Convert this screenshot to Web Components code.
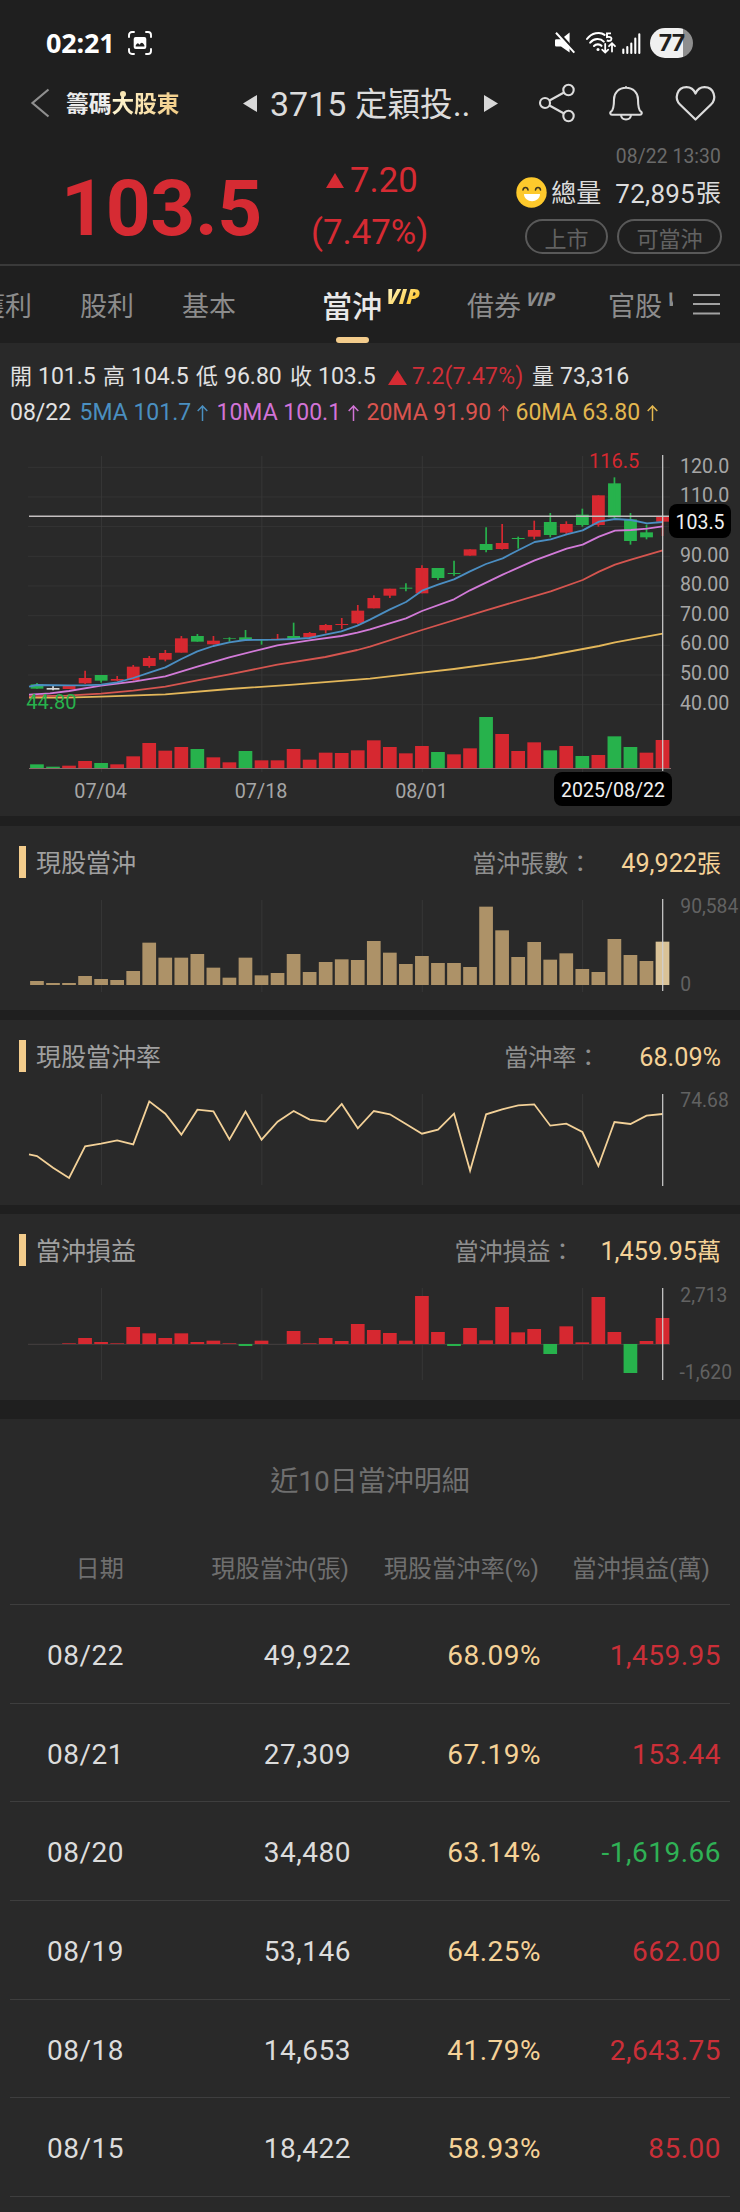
<!DOCTYPE html>
<html lang="zh-Hant">
<head>
<meta charset="utf-8">
<title>3715 定穎投控</title>
<style>
html,body{margin:0;background:#1f1f1f}
body{width:740px;height:2212px;overflow:hidden;font-family:Roboto,"Noto Sans CJK TC",sans-serif;color:#dcdcdc;font-size:23px}
</style>
</head>
<body>
<stock-app></stock-app>
<script>
const def = (name, html, after) => customElements.define(name, class extends HTMLElement {
  constructor(){ super(); this.attachShadow({mode:'open'}).innerHTML = html; }
  connectedCallback(){ if (after) after(this, this.shadowRoot); }
});

def('status-bar', `<style>
:host{display:flex;align-items:center;height:58px;padding:28px 47px 0 46px;box-sizing:border-box;color:#fff}
b{font:700 27px/30px "Noto Sans",sans-serif;margin-right:13px;letter-spacing:-.15px}
.sp{flex:1}
svg{display:block;overflow:visible}
.pill{width:43px;height:30px;border-radius:15px;background:linear-gradient(90deg,#f0f0f0 33px,#8e8e8e 33px);display:flex;align-items:center;justify-content:center;color:#1f1f1f;font:700 23px/30px Inter,sans-serif;letter-spacing:-.8px;margin-left:9px}
</style>
<b>02:21</b>
<svg width="24" height="24" viewBox="0 0 24 24" fill="none" stroke="#fff" stroke-width="1.9" stroke-linecap="round"><path d="M1 6V4a3 3 0 0 1 3-3h2M18 1h2a3 3 0 0 1 3 3v2M23 18v2a3 3 0 0 1-3 3h-2M6 23H4a3 3 0 0 1-3-3v-2"/><rect x="5.7" y="6" width="12.6" height="12" rx="2" fill="#fff" stroke="none"/><path d="M7.7 14.6c1.5-2.8 2.7-3 3.8-.8 1.5-2.6 3.3-3 4.9.8v1H7.7z" fill="#1f1f1f" stroke="none"/></svg>
<span class="sp"></span>
<svg width="21" height="22" viewBox="0 0 21 22"><path d="M0 8.5a1.3 1.3 0 0 1 1.3-1.3H6L14.6.5V20.5L6 14.5H1.3A1.3 1.3 0 0 1 0 13.2z" fill="#fff"/><path d="M2.7-.2 21 20" stroke="#1f1f1f" stroke-width="2.6"/><path d="M1 .7 19.3 20.6" stroke="#fff" stroke-width="2"/></svg>
<svg width="30" height="22" viewBox="0 0 30 22" style="margin-left:10px" fill="none" stroke="#fff" stroke-width="2.1" stroke-linecap="round"><path d="M1 7C5.5.8 14-.6 18.6 2.8M4.2 10.6C8 6 14.5 6 17.8 9.6M8 14c2-2 5.500-2.200 7.500-.2"/><circle cx="12" cy="17.500" r="1.500" fill="#fff" stroke="none"/><path d="M19.200 12v8.600m-3-3 3 3 3-3M26 19.500v-8m-3 2.700 3-3 3 3" stroke-width="1.800"/><path d="M25 1.400h-4v3.700c4-.8 5 .8 4.200 2.600-.8 1.500-3 1.500-4.400.7" stroke-width="1.900" stroke-linecap="butt"/></svg>
<svg width="19" height="21" viewBox="0 0 19 21" style="margin-left:6px"><path d="M1.300 20v-3.500M5.300 20v-6M9.300 20V10.500M13.300 20V5.500M17.300 20V1.200" stroke="#fff" stroke-width="2.100" stroke-linecap="round"/></svg>
<span class="pill">77</span>`);

def('nav-bar', `<style>
:host{display:flex;height:90px;align-items:center;box-sizing:border-box;padding:0 25px 0 31px}
svg{display:block;overflow:visible;flex:none}
.logo{position:relative;margin-left:17px;font:700 22.700px/30px "Noto Sans CJK TC",sans-serif;width:115px;color:#ececec;white-space:nowrap;margin-top:-1px}
.logo span{background:linear-gradient(100deg,#fff9d8,#f2cb83);-webkit-background-clip:text;background-clip:text;color:transparent}
.logo i{position:absolute;left:54px;top:3px;width:6px;height:6px;border-radius:50%;background:#f8e6b4}
.t{font-size:34px;line-height:44px;width:205px;margin-left:13px;white-space:nowrap;padding-top:3px}
.t span{font-size:32.600px}
</style>
<svg width="18" height="28" viewBox="0 0 18 28"><path d="M17.500.5 1.500 14l16 13.500" fill="none" stroke="#8f8f8f" stroke-width="2.200"/></svg>
<div class="logo">籌碼<span>大股東</span><i></i></div>
<svg width="14" height="17" viewBox="0 0 14 17" style="margin-left:62px"><path d="M14 0v17L0 8.500z" fill="#d8d8d8"/></svg>
<div class="t">3715 <span>定穎投</span>..</div>
<svg width="14" height="17" viewBox="0 0 14 17" style="margin-left:9px"><path d="M0 0v17l14-8.500z" fill="#d8d8d8"/></svg>
<svg width="36" height="38" viewBox="0 0 36 38" style="margin-left:41px" fill="none" stroke="#dcdcdc" stroke-width="2.100"><circle cx="6" cy="19" r="5"/><circle cx="29.500" cy="6" r="5.200"/><circle cx="29.500" cy="32" r="5.200"/><path d="m10.500 16.500 14.500-8M10.500 21.500l14.500 8"/></svg>
<svg width="34" height="36" viewBox="0 0 34 36" style="margin-left:34px" fill="none" stroke="#dcdcdc" stroke-width="2.100" stroke-linejoin="round"><path d="M17 1.200v1.500M17 2.700c-7.300 0-12 5.300-12 11.500 0 8-.8 11-3 12.500-1.300 1-1 3 1 3h28c2 0 2.300-2 1-3-2.200-1.500-3-4.500-3-12.500C29 8 24.300 2.700 17 2.700zM12 30c.5 6 9.500 6 10 0"/></svg>
<svg width="39" height="35" viewBox="0 0 39 35" style="margin-left:33px" fill="none" stroke="#dcdcdc" stroke-width="2.200" stroke-linejoin="round"><path d="M19.500 33.500 4 18.500C-2 12.500.8 1.200 10.500 1.200c4.500 0 7.500 2.800 9 6.300 1.500-3.500 4.500-6.300 9-6.300C38.200 1.200 41 12.500 35 18.500z"/></svg>`);

def('price-head', `<style>
:host{display:flex;height:118px;box-sizing:border-box;border-bottom:2px solid #3a3a3a;padding:0 19px 0 61px;color:#d62b33}
.p{font:700 78.500px/90px Roboto;letter-spacing:-.4px;width:247px;padding-top:15px;height:90px;white-space:nowrap}
.c{width:140px;font-size:34.800px;line-height:52px;padding-top:6px;white-space:nowrap}
.c div:first-child{padding-left:18px;display:flex;align-items:center;gap:6px}
.c div+div{padding-left:3px}
.r{flex:1;display:flex;flex-direction:column;align-items:flex-end;color:#dcdcdc;white-space:nowrap}
.d{font-size:19.300px;line-height:22px;color:#6a6a6a;margin-top:-2px;letter-spacing:.1px}
.v{display:flex;align-items:center;font-size:25px;line-height:32px;margin-top:6px}
.v b{font:400 26px/32px Roboto;margin-left:14px;letter-spacing:.25px;padding-right:1px}
.v>*,.v u{position:relative}
.v u{text-decoration:none;padding-top:4px}
.v b{padding-top:4px}
.v svg{margin-right:4px}
.g{display:flex;gap:9px;margin:9px -1px 0 0}
.g span{border:2px solid #595959;border-radius:18px;height:31px;line-height:37px;font-size:22px;color:#626262;text-align:center;box-sizing:content-box}
</style>
<div class="p">103.5</div>
<div class="c"><div><svg width="18" height="15"><path d="M9 0l9 15H0z" fill="#d62b33"/></svg>7.20</div><div>(7.47%)</div></div>
<div class="r"><div class="d">08/22 13:30</div>
<div class="v"><svg width="31" height="31" viewBox="0 0 31 31"><circle cx="15.500" cy="15.500" r="15.200" fill="#fdc92c"/><path d="M7 13c.5-3.300 4.500-3.300 5 0M19.500 13c.5-3.300 4.500-3.300 5 0" fill="none" stroke="#3c3420" stroke-width="1.600" stroke-linecap="round"/><path d="M8 17h16c0 9.500-16 9.500-16 0z" fill="#fff"/></svg><u>總量</u><b>72,895</b><u>張</u></div>
<div class="g"><span style="width:79px">上市</span><span style="width:101px">可當沖</span></div></div>`);

def('tab-item', `<style>
:host{display:flex;position:relative;font-size:27px;line-height:36px;color:#8c8c8c;white-space:nowrap;height:77px;box-sizing:border-box;padding-top:23px}
:host([on]){font-size:30px;font-weight:500;color:#e8e8e8}
sup{font:italic 700 19px/20px "Open Sans",sans-serif;margin:0 0 0 4px;letter-spacing:-.1px;transform:skewX(-4deg)}
:host([on]) sup{font-size:21px;margin:-3px 0 0 3px;background:linear-gradient(135deg,#fff0b0 10%,#ffc62b 50%,#ffb400);-webkit-background-clip:text;background-clip:text;color:transparent;font-weight:800;padding-right:3px}
i{display:none;position:absolute;left:14px;bottom:0;width:33px;height:6px;border-radius:3px;background:#f3cc8c}
:host([on]) i{display:block}
</style><slot></slot><sup></sup><i></i>`, (h,r)=>{ const s=r.querySelector('sup'); if(h.hasAttribute('vip')) s.textContent='VIP'; else s.remove(); });

def('tab-strip', `<style>
:host{display:flex;height:77px;overflow:hidden}
.w{display:flex;width:673px;overflow:hidden}
svg{margin:27px 0 0 20px}
</style><div class="w"><tab-item style="margin-left:-22px">獲利</tab-item><tab-item style="margin-left:48px">股利</tab-item><tab-item style="margin-left:48px">基本</tab-item><tab-item on vip style="margin-left:86px;width:145px;flex:none">當沖</tab-item><tab-item vip style="width:141px;flex:none">借券</tab-item><tab-item vip>官股</tab-item></div>
<svg width="28" height="24"><path d="M0 2h27M0 11h27M0 20.500h27" stroke="#a2a2a2" stroke-width="2"/></svg>`);

def('info-lines', `<style>
:host{display:block;padding:16px 10px 0;font-size:23px;color:#e2e2e2;height:90px;box-sizing:border-box;white-space:nowrap}
div{display:flex;height:36px;line-height:36px;align-items:center}
span{display:block;flex:none}
em{font-style:normal;font-size:22px;margin-right:6px}
svg{display:block}
</style>
<div><span style="width:93px"><em>開</em>101.5</span><span style="width:93px"><em>高</em>104.5</span><span style="width:94px"><em>低</em>96.80</span><span style="width:98px"><em>收</em>103.5</span><svg width="19" height="15" style="margin-right:5px"><path d="M9.500 0 19 15H0z" fill="#d62b33"/></svg><span style="width:120px;color:#cf2f38;letter-spacing:.2px">7.2(7.47%)</span><span><em>量</em>73,316</span></div>
<div class="m"></div>`, (h,r)=>{
  const m=r.querySelector('.m');
  m.innerHTML='<span style="width:69.500px">08/22</span>'+[['5MA 101.7','#4a8fc0',137,117],['10MA 100.1','#d273d6',150,131],['20MA 91.90','#d9544f',149,131],['60MA 63.80','#e3b74f',149,131]].map(([t,c,w,a])=>`<span style="width:${w}px;color:${c};display:flex;align-items:center"><span style="width:${a}px">${t}</span><svg width="11" height="16" viewBox="0 0 11 16"><path d="M5.500 16V1M.7 6l4.800-5 4.800 5" fill="none" stroke="${c}" stroke-width="1.500"/></svg></span>`).join('');
});

const cx = i => 37 + 16.04*i;
const R='#d62830', G='#27b24c';
const svgWrap = (h,body) => `<style>:host{display:block}svg{display:block;overflow:visible}text{font-family:Roboto,sans-serif}</style><svg width="740" height="${h}" viewBox="0 0 740 ${h}">${body}</svg>`;
const vgrid = (y1,y2) => [4,14,24,34].map(i=>`<path d="M${cx(i)+.3} ${y1}V${y2}" stroke="#373737" stroke-width="1"/>`).join('');
const cursor = (y1,y2) => `<path d="M662.700 ${y1}V${y2}" stroke="#d0d0d0" stroke-width="1.200"/>`;

/* Candles: colour, body top, body bottom, wick top, wick bottom (thirds of a pixel). */
const candles=`g763,776,759,776 w774,779,768,781 r768,777,768,777 r744,760,722,762 g735,752,735,758 r747,752,738,753 r710,750,705,752 r684,708,678,713 r669,689,660,694 r625,668,618,668 g618,635,612,635 r632,643,618,643 g625,627,622,635 g622,630,600,632 g628,631,628,644 r626,629,612,629 g618,626,578,626 r609,622,606,622 r585,601,582,610 r582,585,564,597 r542,580,525,582 r504,535,496,535 r476,497,476,504 g473,476,460,484 r414,490,406,490 g414,444,414,450 g429,432,392,437 r358,377,358,377 g342,360,292,367 r339,357,282,359 g324,327,320,356 r300,320,272,328 g276,315,249,322 r282,308,274,314 g254,285,236,290 r196,285,196,290 g160,262,142,264 g268,333,249,344 g307,322,284,328 r258,275,258,318`.split(' ');
const vol='g1003 g1010 r1007 r993 g999 r1003 r979 r939 r962 r951 g957 r982 r997 g963 r991 r991 r957 r989 r968 r969 r961 r931 r951 r970 r948 g966 r973 r955 g861 r912 r963 r937 g961 r948 g978 r975 g919 g951 r968 r930'.split(' ');
const ma=[
['#e3b75a','87,803 200,803 303,800 496,793 688,777 880,764 1110,746 1266,728 1362,717 1604,684 1797,648 1845,637 1988,611'],
['#d5554f','87,799 200,797 303,791 400,782 496,770 592,751 688,733 832,704 976,681 1072,660 1110,650 1266,600 1458,541 1652,484 1748,450 1797,425 1845,404 1893,389 1988,361'],
['#d27ad8','87,794 150,790 207,783 303,767 400,755 496,739 592,710 688,682 784,658 832,646 928,631 1024,618 1072,608 1110,598 1218,565 1266,543 1362,508 1410,481 1508,434 1604,391 1700,356 1748,344 1797,320 1845,302 1893,300 1941,296 1988,289'],
['#4b8ec2','87,770 111,765 207,766 255,766 303,764 351,757 400,744 448,728 496,712 544,687 592,664 640,648 688,637 736,630 832,629 880,627 928,624 976,614 1024,604 1072,587 1110,569 1170,538 1218,516 1266,482 1314,464 1362,448 1410,424 1458,402 1508,385 1556,360 1604,336 1652,328 1700,313 1748,301 1797,275 1845,267 1893,270 1941,280 1988,276']];
const col={r:R,g:G,w:'#d8d8d8'};
/* The chart starts at page y 433. */
const price=()=>{
  const Y=v=>v/3-3;
  let s='';
  for(let k=0;k<9;k++){const y=34.300+k*29.670;s+=`<path d="M28 ${y}H670" stroke="#343434"/>`;}
  s+=vgrid(23,339);
  candles.forEach((c,i)=>{const k=col[c[0]];const [a,b,p,q]=c.slice(1).split(',').map(Number);
    s+=`<rect x="${cx(i)-6.400}" y="${Y(a)}" width="12.800" height="${(b-a)/3}" fill="${k}"/><path d="M${cx(i)} ${Y(p)}V${Y(q)}" stroke="${k}" stroke-width="1.700"/>`;});
  vol.forEach((v,i)=>{const a=+v.slice(1);s+=`<rect x="${cx(i)-6.900}" y="${Y(a)}" width="13.700" height="${(1015-a)/3}" fill="${col[v[0]]}"/>`;});
  s+='<path d="M29 335.500H671" stroke="#8c6a6c"/>';
  ma.forEach(([c,p])=>{s+=`<polyline points="${p.split(' ').map(q=>{const[x,y]=q.split(',');return x/3+','+Y(y)}).join(' ')}" fill="none" stroke="${c}" stroke-width="1.800" stroke-linejoin="round"/>`;});
  s+='<path d="M29 83.200H670" stroke="#c4bfc0" stroke-width="1.600"/>'+cursor(22,338);
  s+=`<text x="26.300" y="276.300" font-size="20" fill="${G}">44.80</text><text x="589" y="34.700" font-size="20" fill="${R}">116.5</text>`;
  ['120.0','110.0','','90.00','80.00','70.00','60.00','50.00','40.00'].forEach((t,k)=>{if(t)s+=`<text x="680" y="${39.800+k*29.600}" font-size="19.600" fill="#a6a6a6">${t}</text>`;});
  s+='<rect x="669" y="71" width="62" height="34" rx="8" fill="#000"/><text x="700" y="96" font-size="19.500" fill="#f0f0f0" text-anchor="middle">103.5</text>';
  [['07/04',4],['07/18',14],['08/01',24]].forEach(([t,i])=>{s+=`<text x="${cx(i)-.5}" y="364.500" font-size="19.800" fill="#a6a6a6" text-anchor="middle">${t}</text>`;});
  s+='<rect x="554" y="339" width="118" height="34" rx="8" fill="#000"/><text x="613" y="364" font-size="19.500" fill="#f0f0f0" text-anchor="middle">2025/08/22</text>';
  return s;
};
def('price-chart', svgWrap(383, price()));

/* The three small charts start 74px below the top of their panel. */
const tops=[513,519,519,498,507,510,483,398,443,443,432,473,503,443,496,489,432,486,456,448,450,393,428,462,438,459,459,471,290,361,441,396,449,430,477,486,387,435,453,395];
def('volume-chart', svgWrap(100,
  vgrid(0,92)+tops.map((t,i)=>`<rect x="${cx(i)-6.900}" y="${t/3-90}" width="13.700" height="${(525-t)/3}" fill="${i==39?'#d9c297':'#ad9268'}"/>`).join('')+cursor(-1,91)+
  '<text x="680.300" y="12.600" font-size="19.300" fill="#626262">90,584</text><text x="680.300" y="91" font-size="19.300" fill="#626262">0</text>'));
const rate=[1038,1073,1104,1009,1001,991,1003,874,911,974,899,904,988,905,989,935,903,929,935,882,955,903,913,942,971,959,911,1082,913,898,886,883,947,941,966,1068,936,942,917,912];
def('rate-chart', svgWrap(100,
  vgrid(0,91)+`<polyline points="29,${1033/3-284} ${rate.map((t,i)=>cx(i)+','+(t/3-284)).join(' ')}" fill="none" stroke="#f3d198" stroke-width="1.800"/>`+cursor(0,92)+
  '<text x="680.300" y="12.700" font-size="19.300" fill="#626262">74.68</text>'));
const pl=[0,0,2,18,6,2,51,32,18,32,6,10,2,-6,10,0,39,2,18,9,60,42,33,10,144,36,-6,48,11,111,35,45,-30,53,5,141,36,-87,9,78];
def('profit-chart', svgWrap(100,
  vgrid(0,92)+'<path d="M28 56.300H670" stroke="#454040"/>'+pl.map((h,i)=>`<rect x="${cx(i)-6.900}" y="${56-Math.max(h,0)/3}" width="13.700" height="${Math.abs(h)/3}" fill="${h<0?G:R}"/>`).join('')+cursor(0,92)+
  '<text x="680.300" y="13.700" font-size="19.300" fill="#626262">2,713</text><text x="679.500" y="90.700" font-size="19.300" fill="#626262">-1,620</text>'));

def('chart-panel', `<style>
:host{display:block;background:#292929;box-sizing:border-box}
.h{display:flex;align-items:flex-start;height:54px;padding:0 19px;margin-top:20px;box-sizing:border-box;white-space:nowrap}
.m{width:7px;height:32px;background:#f3cc8c;margin-right:10px}
.t{font-size:25px;line-height:36px;color:#a0a0a0;flex:1}
.l{font-size:24px;line-height:36px;color:#8e8e8e;text-align:left}
.v{font-size:25.200px;line-height:36px;color:#f5d297;text-align:right;box-sizing:border-box}
.v em{font-style:normal;font-size:24px}
.x{display:flow-root}
</style><div class="x"><div class="h"><span class="m"></span><span class="t"></span><span class="l"></span><span class="v"></span></div><slot></slot></div>`, (h,r)=>{
  r.querySelector('.t').textContent=h.getAttribute('title-text');
  r.querySelector('.l').textContent=h.getAttribute('label');
  r.querySelector('.l').style.width=h.getAttribute('lw')+'px';
  r.querySelector('.v').innerHTML=h.getAttribute('value').replace(/[張萬]/,'<em>$&</em>');
});

def('detail-row', `<style>
:host{display:grid;grid-template-columns:114px 227px 190px 180px;height:98.670px;box-sizing:border-box;border-bottom:1.500px solid #3e3e3e;margin:0 10px;line-height:98px;font-size:28px;letter-spacing:.5px;color:#dcdcdc;text-align:right;white-space:nowrap;padding-top:2px}
.a{color:#f5d297}.r{color:#cb2f38}.g{color:#2fb155}
</style><span></span><span></span><span class="a"></span><span></span>`, (h,r)=>{
  const v=h.getAttribute('cells').split('|'); r.querySelectorAll('span').forEach((s,i)=>s.textContent=v[i]);
  r.querySelectorAll('span')[3].className=v[3][0]=='-'?'g':'r';
});
def('detail-table', `<style>
:host{display:block;background:#292929;height:793px;overflow:hidden}
h2{margin:0;font-weight:400;font-size:28px;color:#6f6f6f;text-align:center;line-height:36px;padding-top:45px;height:113px;box-sizing:border-box}
.h{display:grid;grid-template-columns:114px 225px 190px 171px;margin:0 10px;height:73px;box-sizing:border-box;border-bottom:1.500px solid #3e3e3e;font-size:24.200px;line-height:74px;color:#6f6f6f;text-align:right;white-space:nowrap}
</style><h2>近10日當沖明細</h2><div class="h"><span>日期</span><span>現股當沖(張)</span><span>現股當沖率(%)</span><span>當沖損益(萬)</span></div>
${['08/22|49,922|68.09%|1,459.95','08/21|27,309|67.19%|153.44','08/20|34,480|63.14%|-1,619.66','08/19|53,146|64.25%|662.00','08/18|14,653|41.79%|2,643.75','08/15|18,422|58.93%|85.00'].map(c=>`<detail-row cells="${c}"></detail-row>`).join('')}`);

def('stock-app', `<style>
:host{display:flex;flex-direction:column;width:740px}
:host>*{flex:none}
.main{background:#292929;height:473px}
</style>
<status-bar></status-bar><nav-bar></nav-bar><price-head></price-head><tab-strip></tab-strip>
<div class="main"><info-lines></info-lines><price-chart></price-chart></div>
<chart-panel style="height:184px;margin-top:10px" title-text="現股當沖" label="當沖張數：" lw="149" value="49,922張"><volume-chart></volume-chart></chart-panel>
<chart-panel style="height:185px;margin-top:10px" title-text="現股當沖率" label="當沖率：" lw="135" value="68.09%"><rate-chart></rate-chart></chart-panel>
<chart-panel style="height:186px;margin-top:9px" title-text="當沖損益" label="當沖損益：" lw="146" value="1,459.95萬"><profit-chart></profit-chart></chart-panel>
<detail-table style="margin-top:19px"></detail-table>`);
</script>
</body>
</html>
